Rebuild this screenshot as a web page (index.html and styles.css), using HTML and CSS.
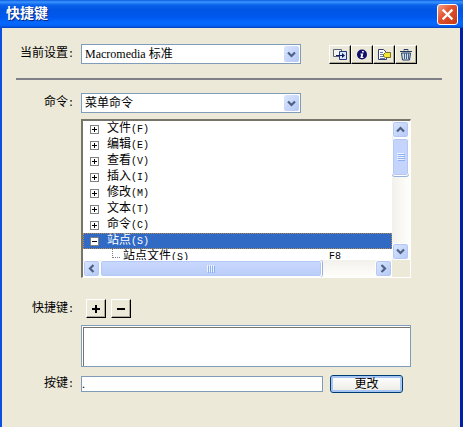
FILE: index.html
```html
<!DOCTYPE html>
<html lang="zh-CN">
<head>
    <meta charset="UTF-8">
    <meta name="viewport" content="width=device-width, initial-scale=1.0">
    <title>快捷键</title>
    <link rel="stylesheet" href="styles.css">
</head>
<body>
    <header class="titlebar">
        <h1>快捷键</h1>
        <button class="close-btn" type="button" aria-label="关闭">
            <svg width="13" height="13" viewBox="0 0 12 12"><path d="M1.5 1.5l9 9M10.5 1.5l-9 9" stroke="#fff" stroke-width="2"/></svg>
        </button>
    </header>

    <form class="client">
        <div class="row settings-row">
            <label for="currentSet">当前设置<span class="latin">:</span></label>
            <div class="dropdown">
                <select id="currentSet"><option>Macromedia 标准</option></select>
                <span class="arrow"><svg width="9" height="7" viewBox="0 0 9 7"><path d="M1 1.5l3.5 3.5L8 1.5" fill="none" stroke="#4d6185" stroke-width="2.2"/></svg></span>
            </div>
            <div class="toolbar">
                <button class="raised" type="button" aria-label="复制副本">
                    <svg width="16" height="14" viewBox="0 0 16 14">
                        <path d="M1.5 2.5h8v7h-8z" fill="#f4f4ee" stroke="#55607c"/>
                        <path d="M7.5 4.5h7v8h-7z" fill="#dce6ff" stroke="#24347a"/>
                        <path d="M4 8.5h7" stroke="#101c60"/>
                        <path d="M10 6l3 2.500-3 2.500z" fill="#101c60"/>
                    </svg>
                </button>
                <button class="raised" type="button" aria-label="重命名">
                    <svg width="16" height="14" viewBox="0 0 16 14">
                        <circle cx="8" cy="7.5" r="5" fill="#10106c"/>
                        <path d="M8 4h1.800v1.500H8zM6.500 6.500h2.800l-.8 3.500h1v1H6.400L7.200 7.500h-.9z" fill="#fff"/>
                    </svg>
                </button>
                <button class="raised" type="button" aria-label="导出为 HTML">
                    <svg width="16" height="14" viewBox="0 0 16 14">
                        <path d="M2.500 2.500h5l3 3v7h-8z" fill="#fff" stroke="#34406e"/>
                        <path d="M4 5.500h3M4 7.500h4M4 9.500h4M4 11.500h5" stroke="#5c78b8"/>
                        <path d="M7.500 7.500l2-2H14.500v5H9.500l-2-1z" fill="#f4e83c" stroke="#77701c"/>
                    </svg>
                </button>
                <button class="raised" type="button" aria-label="删除设置">
                    <svg width="16" height="14" viewBox="0 0 16 14">
                        <path d="M6 3.500v-1h4v1M2 4.500h12" fill="none" stroke="#243a64"/>
                        <path d="M3.500 6h9l-1 7h-7z" fill="#d4e2ee" stroke="#243a64"/>
                        <path d="M6.500 6v6M8.500 6v6M10.500 6v6" stroke="#446088"/>
                    </svg>
                </button>
            </div>
        </div>

        <hr>

        <div class="row command-row">
            <label for="commandType">命令<span class="latin">:</span></label>
            <div class="dropdown">
                <select id="commandType"><option>菜单命令</option></select>
                <span class="arrow"><svg width="9" height="7" viewBox="0 0 9 7"><path d="M1 1.5l3.5 3.5L8 1.5" fill="none" stroke="#4d6185" stroke-width="2.2"/></svg></span>
            </div>
        </div>

        <div class="tree-box">
            <ul class="tree">
                <li><button class="toggle plus" type="button" aria-label="展开"></button><span>文件<span class="latin">(F)</span></span></li>
                <li><button class="toggle plus" type="button" aria-label="展开"></button><span>编辑<span class="latin">(E)</span></span></li>
                <li><button class="toggle plus" type="button" aria-label="展开"></button><span>查看<span class="latin">(V)</span></span></li>
                <li><button class="toggle plus" type="button" aria-label="展开"></button><span>插入<span class="latin">(I)</span></span></li>
                <li><button class="toggle plus" type="button" aria-label="展开"></button><span>修改<span class="latin">(M)</span></span></li>
                <li><button class="toggle plus" type="button" aria-label="展开"></button><span>文本<span class="latin">(T)</span></span></li>
                <li><button class="toggle plus" type="button" aria-label="展开"></button><span>命令<span class="latin">(C)</span></span></li>
                <li class="selected"><button class="toggle" type="button" aria-label="折叠"></button><span>站点<span class="latin">(S)</span></span></li>
                <li class="child"><i class="branch"></i><span>站点文件<span class="latin">(S)</span></span><span class="latin key">F8</span></li>
            </ul>
            <div class="scroll vertical">
                <button class="scroll-btn" type="button" aria-label="向上"><svg width="9" height="7" viewBox="0 0 9 7"><path d="M1 5.5L4.500 2 8 5.5" fill="none" stroke="#4d6185" stroke-width="2.2"/></svg></button>
                <div class="thumb"><svg width="8" height="8" viewBox="0 0 8 8"><path d="M0 .5h7M0 2.500h7M0 4.500h7M0 6.500h7" stroke="#eef4fe"/><path d="M1 1.500h7M1 3.500h7M1 5.500h7M1 7.500h7" stroke="#8cb0f8"/></svg></div>
                <button class="scroll-btn last" type="button" aria-label="向下"><svg width="9" height="7" viewBox="0 0 9 7"><path d="M1 1.5l3.500 3.500L8 1.5" fill="none" stroke="#4d6185" stroke-width="2.2"/></svg></button>
            </div>
            <div class="scroll horizontal">
                <button class="scroll-btn" type="button" aria-label="向左"><svg width="7" height="9" viewBox="0 0 7 9"><path d="M5.5 1L2 4.500 5.5 8" fill="none" stroke="#4d6185" stroke-width="2.2"/></svg></button>
                <div class="thumb"><svg width="8" height="8" viewBox="0 0 8 8"><path d="M.5 0v7M2.500 0v7M4.500 0v7M6.500 0v7" stroke="#eef4fe"/><path d="M1.500 1v7M3.500 1v7M5.500 1v7M7.500 1v7" stroke="#8cb0f8"/></svg></div>
                <button class="scroll-btn last" type="button" aria-label="向右"><svg width="7" height="9" viewBox="0 0 7 9"><path d="M1.5 1L5 4.500 1.5 8" fill="none" stroke="#4d6185" stroke-width="2.2"/></svg></button>
            </div>
        </div>

        <div class="row shortcut-row">
            <label for="shortcutList">快捷键<span class="latin">:</span></label>
            <div class="add-remove">
                <button class="raised" type="button" aria-label="添加"><svg width="10" height="10" viewBox="0 0 10 10"><path d="M1 5h8M5 1v8" stroke="#000" stroke-width="2"/></svg></button>
                <button class="raised" type="button" aria-label="移除"><svg width="10" height="10" viewBox="0 0 10 10"><path d="M1 5h8" stroke="#000" stroke-width="2"/></svg></button>
            </div>
        </div>
        <textarea class="shortcuts" id="shortcutList" readonly></textarea>

        <div class="row key-row">
            <label for="keyInput">按键<span class="latin">:</span></label>
            <input class="key-input" type="text" id="keyInput" value=".">
            <button class="change-btn" type="button">更改</button>
        </div>
    </form>
</body>
</html>
```

FILE: styles.css
```css
* { box-sizing: border-box; }
body {
    display: flex;
    flex-direction: column;
    min-height: 100vh;
    margin: 0;
    background: #ece9d8;
    color: #000;
    font: 12px/16px "Liberation Serif", "Noto Sans CJK SC", sans-serif;
}
button, input, select, textarea {
    margin: 0;
    padding: 0;
    border-radius: 0;
    font: inherit;
    color: inherit;
}
button {
    display: flex;
    align-items: center;
    justify-content: center;
}
svg { display: block; flex: none; }

/* title bar */
.titlebar {
    display: flex;
    align-items: center;
    justify-content: space-between;
    height: 28px;
    padding: 0 5px 0 6px;
    background: linear-gradient(#0a5be0 0, #3b95ff 2px, #0a62ea 5px, #0055e3 10px, #0058ee 17px, #0468ff 23px, #0460f4 26px, #0040b8 28px);
}
.titlebar h1 {
    margin: 0;
    font-size: 14px;
    line-height: 20px;
    font-weight: bold;
    color: #fff;
    text-shadow: 1px 1px #0a2a80;
}
.close-btn {
    width: 21px;
    height: 21px;
    border: 1px solid #fff;
    border-radius: 3px;
    background: linear-gradient(135deg, #f0a085, #e0502c 45%, #c43a14);
}

.client {
    flex: 1;
    padding: 16px 18px 32px 14px;
    border-left: 2px solid #0a50e0;
    border-right: 3px solid #0020a8;
}
.row {
    display: flex;
    align-items: center;
}
.row label {
    width: 58px;
    margin-right: 7px;
    text-align: right;
    white-space: nowrap;
}
hr {
    height: 2px;
    margin: 14px 0 13px;
    border: 0;
    background: #808088;
}

.dropdown {
    position: relative;
    width: 220px;
}
.dropdown select {
    display: block;
    width: 100%;
    height: 20px;
    padding: 0 20px 0 3px;
    border: 1px solid #7f9db9;
    background: #fff;
    appearance: none;
}
.arrow {
    position: absolute;
    top: 2px;
    right: 2px;
    bottom: 2px;
    display: flex;
    align-items: center;
    justify-content: center;
    width: 15px;
    border-radius: 2px;
    background: linear-gradient(135deg, #dbe6fe, #b4c8f6);
    pointer-events: none;
}

/* raised buttons */
.raised {
    width: 22px;
    height: 19px;
    border: 1px solid #fff;
    border-right-color: #000;
    border-bottom-color: #000;
    background: #ece9d8;
    box-shadow: inset -1px -1px #aca899;
}
.toolbar {
    display: flex;
    margin-left: 28px;
}

/* command tree */
.tree-box {
    display: grid;
    grid-template-columns: 1fr 18px;
    grid-template-rows: 139px 17px;
    margin: 6px 31px 0 65px;
    border: 1px solid #fff;
    border-top: 2px solid #77746a;
    border-left: 2px solid #77746a;
}
.tree {
    margin: 0;
    padding: 0;
    overflow: hidden;
    list-style: none;
    background: #fff;
}
.tree li {
    display: flex;
    align-items: center;
    gap: 8px;
    height: 16px;
    padding-left: 7px;
    white-space: nowrap;
}
.tree .selected {
    background: #316ac5;
    color: #fff;
    outline: 1px dotted #b88c4c;
    outline-offset: -1px;
}
.latin {
    font-family: "Liberation Mono", monospace;
    font-size: 10px;
}
.toggle {
    width: 9px;
    height: 9px;
    border: 1px solid #808080;
    background: linear-gradient(#000, #000) center / 5px 1px no-repeat #fff;
}
.toggle.plus {
    background: linear-gradient(#000, #000) center / 5px 1px no-repeat, linear-gradient(#000, #000) center / 1px 5px no-repeat, #fff;
}
.tree .child {
    gap: 3px;
    padding-left: 29px;
}
.branch {
    align-self: flex-start;
    width: 8px;
    height: 9px;
    border-left: 1px dotted #808080;
    border-bottom: 1px dotted #808080;
}
.key {
    margin-left: auto;
    padding-right: 51px;
}

/* scroll bars */
.scroll {
    display: flex;
    background: linear-gradient(90deg, #f3f1ec, #fefefb);
}
.scroll.vertical { flex-direction: column; }
.scroll.horizontal { background: linear-gradient(#f3f1ec, #fefefb); }
.scroll-btn, .thumb {
    flex: none;
    border: 1px solid #fff;
    border-radius: 3px;
    background: linear-gradient(135deg, #dbe6fe, #b4c8f6);
    box-shadow: inset 0 0 0 1px #b4c8f6;
}
.scroll-btn {
    width: 17px;
    height: 17px;
}
.scroll-btn.last { margin-left: auto; }
.vertical .last {
    margin-top: auto;
    margin-left: 0;
}
.thumb {
    display: flex;
    align-items: center;
    justify-content: center;
    background: #c4d4fc;
    box-shadow: inset 0 0 0 1px #b4c8f6, 0 1px #98b0dc;
}
.vertical .thumb {
    width: 17px;
    height: 38px;
}
.horizontal .thumb {
    width: 72%;
    background: linear-gradient(#cad8fd, #b9ccf8);
    box-shadow: inset 0 0 0 1px #b4c8f6, 1px 0 #98b0dc;
}

/* shortcut fields */
.shortcut-row { margin-top: 21px; }
.add-remove {
    display: flex;
    gap: 5px;
    padding-left: 5px;
}
.add-remove .raised { width: 20px; }
.shortcuts {
    display: block;
    width: calc(100% - 96px);
    height: 42px;
    margin: 7px 31px 8px 65px;
    border: 1px solid #7f9db9;
    background: #fff;
    box-shadow: inset 1px 1px #fff, inset 2px 2px #77746a;
    resize: none;
}
.key-row { padding-right: 39px; }
.key-input {
    flex: 1;
    min-width: 0;
    height: 16px;
    border: 1px solid #7f9db9;
    background: #fff;
}
.change-btn {
    width: 73px;
    height: 18px;
    margin-left: 7px;
    border: 1px solid #003c74;
    border-radius: 3px;
    background: linear-gradient(#fff, #ecebe5);
    box-shadow: inset 0 0 0 2px #a8c6f4;
}
```
